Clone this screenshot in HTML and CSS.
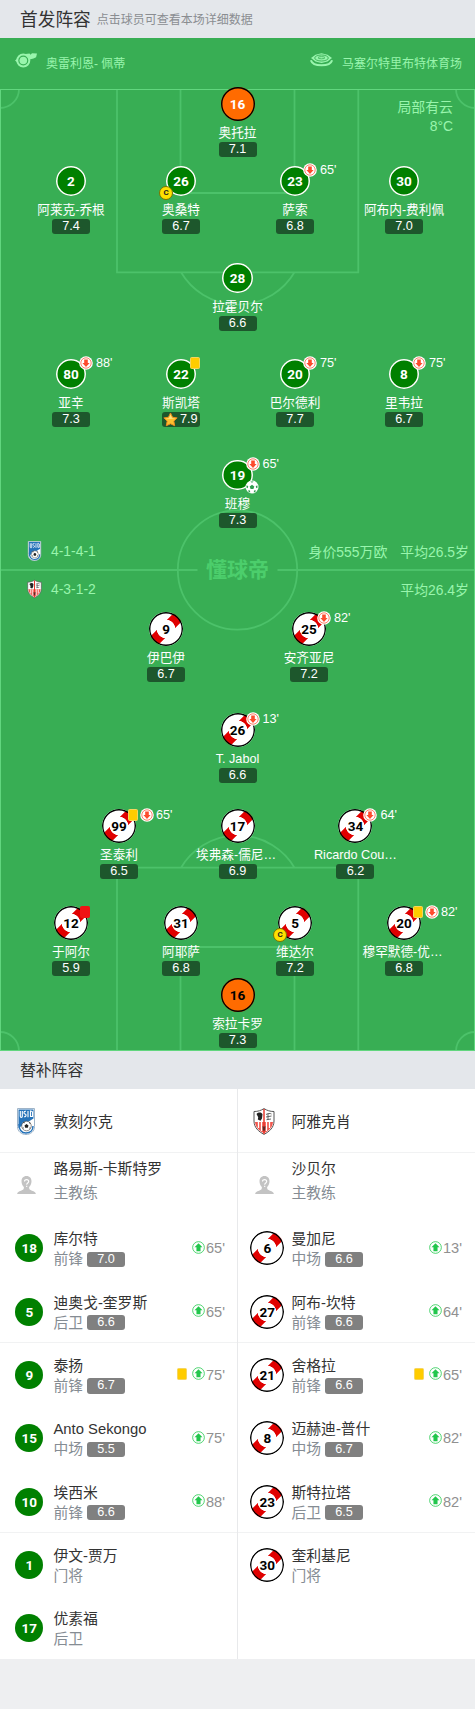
FILE: index.html
```html
<!DOCTYPE html>
<html lang="zh-CN">
<head>
  <meta charset="UTF-8" />
  <meta name="viewport" content="width=device-width, initial-scale=1.0"/>
  <title>首发阵容</title>
  <link rel="stylesheet" href="styles.css">
</head>
<body>

  <!-- shared icons -->
  <svg class="sprite" width="0" height="0">
    <symbol id="i-down" viewBox="0 0 14 14">
      <circle cx="7" cy="7" r="6.8" fill="#fff"/>
      <circle cx="7" cy="7" r="5.2" fill="none" stroke="#fd4b2d" stroke-width=".7"/>
      <path d="M5.2 3.4h3.6v3.7h1.8L7 10.900 3.400 7.100h1.800z" fill="#fd4b2d"/>
    </symbol>
    <symbol id="i-up" viewBox="0 0 14 14">
      <circle cx="7" cy="7" r="6.3" fill="#fff" stroke="#2bcb54" stroke-width=".9"/>
      <path d="M7 2.4l4.300 4.200H9.200v4.400H4.800V6.600H2.700z" fill="#22c64c"/>
    </symbol>
    <symbol id="i-ball" viewBox="0 0 14 14">
      <circle cx="7" cy="7" r="6.500" fill="#fff"/>
      <path d="M7 4.700l2.300 1.700-.9 2.700H5.600l-.9-2.700zM5.300 1.500h3.400L7 2.800zM12.300 5.200l-1.500 1 .5 2 1.300-.7zM1.700 5.200l1.500 1-.5 2-1.300-.7zM9 10.500l1.800-.2-.5 1.600-1.500.5zM5 10.500l-1.800-.2.5 1.600 1.500.5z" fill="#2f9e4f"/>
    </symbol>
    <symbol id="i-star" viewBox="0 0 14 14">
      <path d="M7 .9l1.900 4 4.300.6-3.100 3 .8 4.300L7 11l-3.900 1.800.8-4.300-3.100-3 4.300-.6z" fill="#fdc02f" stroke="#f08a1d" stroke-width=".9" stroke-linejoin="round"/>
      <path d="M7 2.300l1.300 3 3.200.5-4.500.8-4.500-.8 3.200-.5z" fill="#ffe37a"/>
    </symbol>
    <symbol id="i-coach" viewBox="0 0 19 18">
      <path d="M9.500 0c3.300 0 5 2.300 5 5.200 0 2.500-1 4.500-2.400 5.900 0 2.300.6 2.900 2.900 3.700 2.300.7 3.500 1.300 3.900 3.200H.1c.4-1.900 1.600-2.500 3.900-3.200 2.300-.8 2.900-1.400 2.900-3.700C5.500 9.700 4.500 7.700 4.500 5.200 4.500 2.300 6.200 0 9.500 0z" fill="#c3c3c3"/>
      <path d="M7.500 5.500c0-2.600 4.200-2.500 4.200 0 0 1.600-2 1.500-2 3.200M9.700 9.700v1.300" fill="none" stroke="#fff" stroke-width="1.100"/>
    </symbol>
    <symbol id="i-dunkerque" viewBox="0 0 18 27">
      <path d="M.5.5h17v18c0 5-4 8-8.500 8S.5 23.500.5 18.500z" fill="#fff" stroke="#9fb4c8"/>
      <path d="M1.500 1.500h15v9L1.500 20z" fill="#2673b9"/>
      <path d="M3.300 3v5.200c0 1.500 2 1.500 2 0V3M9 3.300c-2.500-.5-2.500 2.500-1 2.700 1.700.3 1.200 3.200-.9 2.600M11 3v6.300M13.500 3v5.500h2V4c0-.7-2-1-2-1z" fill="none" stroke="#fff" stroke-width="1.100"/>
      <path d="M2 16c0 6 2.500 9 7 9s7-3 7-7" fill="none" stroke="#2673b9" stroke-width="1.500"/>
      <circle cx="9.500" cy="18" r="4.800" fill="#fff" stroke="#444" stroke-width=".6"/>
      <path d="M9.500 16l2 1.500-.7 2.300H8.200l-.7-2.300zM6 14.500l1.800-.8-.6 1.700zM12 13.900l1.700 1-.9 1zM5.500 19l1 .5.200 1.800zM13.500 19l-.9.600v1.800z" fill="#222"/>
    </symbol>
    <symbol id="i-ajaccio" viewBox="0 0 22 27">
      <path d="M1 3.500C5 3.500 8 2.500 11 .6c3 1.900 6 2.900 10 2.900v9.500c0 6.500-4.500 10.500-10 13.400C5.500 23.500 1 19.500 1 13z" fill="#fff" stroke="#555" stroke-width="1"/>
      <path d="M2 14h18c-.3 5.200-4 8.700-9 11.200C6 22.700 2.300 19.200 2 14z" fill="#f0564d"/>
      <path d="M5.500 14v6M8.500 14v9M13.500 14v9M16.500 14v6" stroke="#fff" stroke-width="1.300"/>
      <path d="M11 1v25" stroke="#e8382e" stroke-width="1.500"/>
      <path d="M3.500 6c2-2 5-1.800 6 .2l-.5 4.300-1.500 2.300-2.700-1.300.4-2.300z" fill="#222"/>
      <path d="M13 6.500c2-1 4-1.500 5.500-.5M13 9l5.500-1M13.500 11.700l4.500-.7M15 5.500v6.500" fill="none" stroke="#555" stroke-width=".9"/>
      <path d="M9.500 18l1.500.8 1.500-.8-.4 4-1.100 1.200-1.100-1.200z" fill="#222" opacity=".7"/>
    </symbol>
  </svg>

  <div class="section-title">
    <h2>首发阵容</h2>
    <span>点击球员可查看本场详细数据</span>
  </div>

  <div class="field">
    <svg class="pitch" width="475" height="962" viewBox="0 0 475 962">
      <g fill="none" stroke="#4cc26a" stroke-width="1.800">
        <path d="M117 0v183.300h241.300V0M180.500 0v104h114V0M181 183.300a65.900 65.900 0 0 0 113.500 0"/>
        <path d="M117 962V778.700h241.300V962M180.500 962V858h114v104M181 778.700a65.900 65.900 0 0 1 113.500 0"/>
        <path d="M0 19a19 19 0 0 0 19-19M475 19a19 19 0 0 1-19-19M0 943a19 19 0 0 1 19 19M475 943a19 19 0 0 0-19 19"/>
        <circle cx="237.500" cy="481" r="59.700"/>
        <path d="M0 481h197.500M277.500 481H475"/>
      </g>
      <rect x=".5" y=".5" width="474" height="961" fill="none" stroke="#61d67e"/>
      <text class="pitch-logo" x="237.500" y="488">懂球帝</text>
    </svg>

    <div class="match-info">
      <div class="info-item">
        <svg width="22" height="15" viewBox="0 0 22 15">
          <path d="M10.500 1L14.500.5l1 1.300L17 .3l5 .2-.9 3.800-2.600 1.200-4 1z" fill="#99f5ad"/>
          <circle cx="8.300" cy="7.500" r="6" fill="none" stroke="#99f5ad" stroke-width="2"/>
          <circle cx="8.300" cy="7.500" r="3.800" fill="#99f5ad"/>
          <path d="M0 7.500l2.500-1.900v4z" fill="#99f5ad"/>
        </svg>
        <span>奥雷利恩- 佩蒂</span>
      </div>
      <div class="info-item">
        <svg width="23" height="14" viewBox="0 0 23 14">
          <path d="M11.500.3l6 1.500 4.500 3.200-4.500 3.500-6 1.500-6-1.500L1 5l4.500-3.200z" fill="#99f5ad"/>
          <ellipse cx="11.500" cy="5" rx="6.800" ry="3" fill="none" stroke="#38ae54" stroke-width=".9"/>
          <ellipse cx="11.500" cy="4.700" rx="3.500" ry="1.100" fill="none" stroke="#38ae54" stroke-width=".8"/>
          <path d="M.9 7.200c1.800 6.700 19.400 6.700 21.200 0" fill="none" stroke="#99f5ad" stroke-width="2"/>
        </svg>
        <span>马塞尔特里布特体育场</span>
      </div>
    </div>
    <div class="weather">局部有云<br>8°C</div>

    <div class="line line-1">
      <div class="player"><div class="icon"><b class="kit keeper">16</b></div><p>奥托拉</p><i>7.1</i></div>
    </div>
    <div class="line line-4 home-back">
      <div class="player"><div class="icon"><b class="kit home">2</b></div><p>阿莱克-乔根</p><i>7.4</i></div>
      <div class="player"><div class="icon"><b class="kit home">26</b><em class="captain">C</em></div><p>奥桑特</p><i>6.7</i></div>
      <div class="player"><div class="icon"><b class="kit home">23</b><div class="events"><svg><use href="#i-down"/></svg>65'</div></div><p>萨索</p><i>6.8</i></div>
      <div class="player"><div class="icon"><b class="kit home">30</b></div><p>阿布内-费利佩</p><i>7.0</i></div>
    </div>
    <div class="line line-1 home-dm">
      <div class="player"><div class="icon"><b class="kit home">28</b></div><p>拉霍贝尔</p><i>6.6</i></div>
    </div>
    <div class="line line-4 home-mid">
      <div class="player"><div class="icon"><b class="kit home">80</b><div class="events"><svg><use href="#i-down"/></svg>88'</div></div><p>亚辛</p><i>7.3</i></div>
      <div class="player"><div class="icon"><b class="kit home">22</b><div class="events"><u class="card"></u></div></div><p>斯凯塔</p><i class="best"><svg><use href="#i-star"/></svg>7.9</i></div>
      <div class="player"><div class="icon"><b class="kit home">20</b><div class="events"><svg><use href="#i-down"/></svg>75'</div></div><p>巴尔德利</p><i>7.7</i></div>
      <div class="player"><div class="icon"><b class="kit home">8</b><div class="events"><svg><use href="#i-down"/></svg>75'</div></div><p>里韦拉</p><i>6.7</i></div>
    </div>
    <div class="line line-1 home-top">
      <div class="player"><div class="icon"><b class="kit home">19</b><div class="events"><svg><use href="#i-down"/></svg>65'</div><svg class="goal"><use href="#i-ball"/></svg></div><p>班穆</p><i>7.3</i></div>
    </div>

    <div class="formations">
      <div class="formation"><svg class="badge"><use href="#i-dunkerque"/></svg><span>4-1-4-1</span><div class="stats"><span>身价555万欧</span><span>平均26.5岁</span></div></div>
      <div class="formation"><svg class="badge"><use href="#i-ajaccio"/></svg><span>4-3-1-2</span><div class="stats"><span>平均26.4岁</span></div></div>
    </div>

    <div class="line line-2">
      <div class="player"><div class="icon"><b class="kit away">9</b></div><p>伊巴伊</p><i>6.7</i></div>
      <div class="player"><div class="icon"><b class="kit away">25</b><div class="events"><svg><use href="#i-down"/></svg>82'</div></div><p>安齐亚尼</p><i>7.2</i></div>
    </div>
    <div class="line line-1 away-am">
      <div class="player"><div class="icon"><b class="kit away">26</b><div class="events"><svg><use href="#i-down"/></svg>13'</div></div><p>T. Jabol</p><i>6.6</i></div>
    </div>
    <div class="line line-3">
      <div class="player"><div class="icon"><b class="kit away">99</b><div class="events"><u class="card"></u><svg><use href="#i-down"/></svg>65'</div></div><p>圣泰利</p><i>6.5</i></div>
      <div class="player"><div class="icon"><b class="kit away">17</b></div><p class="cut">埃弗森-儒尼…</p><i>6.9</i></div>
      <div class="player"><div class="icon"><b class="kit away">34</b><div class="events"><svg><use href="#i-down"/></svg>64'</div></div><p>Ricardo Cou…</p><i>6.2</i></div>
    </div>
    <div class="line line-4 away-back">
      <div class="player"><div class="icon"><b class="kit away">12</b><div class="events"><u class="card red"></u></div></div><p>于阿尔</p><i>5.9</i></div>
      <div class="player"><div class="icon"><b class="kit away">31</b></div><p>阿耶萨</p><i>6.8</i></div>
      <div class="player"><div class="icon"><b class="kit away">5</b><em class="captain">C</em></div><p>维达尔</p><i>7.2</i></div>
      <div class="player"><div class="icon"><b class="kit away">20</b><div class="events"><u class="card"></u><svg><use href="#i-down"/></svg>82'</div></div><p class="cut">穆罕默德-优…</p><i>6.8</i></div>
    </div>
    <div class="line line-1 away-gk">
      <div class="player"><div class="icon"><b class="kit keeper dark">16</b></div><p>索拉卡罗</p><i>7.3</i></div>
    </div>
  </div>

  <div class="section-title bench-title">
    <h3>替补阵容</h3>
  </div>

  <div class="bench">
    <div class="team">
      <div class="row"><div class="pic"><svg class="badge"><use href="#i-dunkerque"/></svg></div><div class="who">敦刻尔克</div></div>
      <div class="row coach"><div class="pic"><svg class="face"><use href="#i-coach"/></svg></div><div class="who">路易斯-卡斯特罗<small>主教练</small></div></div>
      <div class="row"><div class="pic"><b class="kit home">18</b></div><div class="who">库尔特<small>前锋<i>7.0</i></small></div><div class="sub"><svg><use href="#i-up"/></svg>65'</div></div>
      <div class="row"><div class="pic"><b class="kit home">5</b></div><div class="who">迪奥戈-奎罗斯<small>后卫<i>6.6</i></small></div><div class="sub"><svg><use href="#i-up"/></svg>65'</div></div>
      <div class="row"><div class="pic"><b class="kit home">9</b></div><div class="who">泰扬<small>前锋<i>6.7</i></small></div><div class="sub"><u class="card"></u><svg><use href="#i-up"/></svg>75'</div></div>
      <div class="row"><div class="pic"><b class="kit home">15</b></div><div class="who">Anto Sekongo<small>中场<i>5.5</i></small></div><div class="sub"><svg><use href="#i-up"/></svg>75'</div></div>
      <div class="row"><div class="pic"><b class="kit home">10</b></div><div class="who">埃西米<small>前锋<i>6.6</i></small></div><div class="sub"><svg><use href="#i-up"/></svg>88'</div></div>
      <div class="row"><div class="pic"><b class="kit home">1</b></div><div class="who">伊文-贾万<small>门将</small></div></div>
      <div class="row"><div class="pic"><b class="kit home">17</b></div><div class="who">优素福<small>后卫</small></div></div>
    </div>
    <div class="team">
      <div class="row"><div class="pic"><svg class="badge"><use href="#i-ajaccio"/></svg></div><div class="who">阿雅克肖</div></div>
      <div class="row coach"><div class="pic"><svg class="face"><use href="#i-coach"/></svg></div><div class="who">沙贝尔<small>主教练</small></div></div>
      <div class="row"><div class="pic"><b class="kit away">6</b></div><div class="who">曼加尼<small>中场<i>6.6</i></small></div><div class="sub"><svg><use href="#i-up"/></svg>13'</div></div>
      <div class="row"><div class="pic"><b class="kit away">27</b></div><div class="who">阿布-坎特<small>前锋<i>6.6</i></small></div><div class="sub"><svg><use href="#i-up"/></svg>64'</div></div>
      <div class="row"><div class="pic"><b class="kit away">21</b></div><div class="who">舍格拉<small>前锋<i>6.6</i></small></div><div class="sub"><u class="card"></u><svg><use href="#i-up"/></svg>65'</div></div>
      <div class="row"><div class="pic"><b class="kit away">8</b></div><div class="who">迈赫迪-普什<small>中场<i>6.7</i></small></div><div class="sub"><svg><use href="#i-up"/></svg>82'</div></div>
      <div class="row"><div class="pic"><b class="kit away">23</b></div><div class="who">斯特拉塔<small>后卫<i>6.5</i></small></div><div class="sub"><svg><use href="#i-up"/></svg>82'</div></div>
      <div class="row"><div class="pic"><b class="kit away">30</b></div><div class="who">奎利基尼<small>门将</small></div></div>
    </div>
  </div>

</body>
</html>
```
FILE: styles.css
```css
* {
  box-sizing: border-box;
}

body {
  margin: 0;
  font-family: "Liberation Sans", "Noto Sans CJK SC", sans-serif;
  background-color: #eeeff1;
  color: #333;
}

h2, h3, p {
  margin: 0;
  font-weight: normal;
}

i, em {
  font-style: normal;
}

u {
  text-decoration: none;
}

.sprite {
  position: absolute;
}

.section-title {
  height: 38px;
  padding: 0 0 2px 20px;
  display: flex;
  align-items: center;
  background-color: #e4e7eb;
}

.section-title h2 {
  font-size: 17.7px;
}

.section-title h3 {
  font-size: 15.8px;
}

.section-title span {
  margin-left: 6px;
  font-size: 12px;
  color: #8a8d91;
}

/* pitch */

.field {
  position: relative;
  height: 1013px;
  background-color: #38ae54;
  color: #fff;
}

.pitch {
  position: absolute;
  left: 0;
  top: 51px;
}

.pitch-logo {
  font-family: "Noto Sans CJK SC", sans-serif;
  font-size: 21px;
  font-weight: bold;
  text-anchor: middle;
  fill: #4cce6c;
}

.match-info {
  height: 49px;
  padding: 0 13px 0 15px;
  display: flex;
  justify-content: space-between;
  align-items: center;
  font-size: 12px;
  color: #99f5ad;
}

.info-item {
  display: flex;
  align-items: center;
  gap: 9px;
}

.info-item svg {
  margin-top: -5px;
}

.weather {
  position: absolute;
  right: 22px;
  top: 60px;
  font-size: 13.9px;
  line-height: 19px;
  text-align: right;
  color: #99f5ad;
}

.line {
  position: relative;
  display: grid;
  justify-items: center;
}

.line-1 {
  grid-template-columns: 475px;
}

.line-2 {
  grid-template-columns: 143px 143px;
  padding-left: 94.5px;
}

.line-3 {
  grid-template-columns: 118px 119px 117px;
  padding-left: 60px;
  margin-top: 26px;
}

.line-4 {
  grid-template-columns: 110px 110px 118px 100px;
  padding-left: 16px;
}

.home-back { margin-top: 7px; }
.home-dm { margin-top: 27px; }
.home-mid { margin-top: 26px; }
.home-top { margin-top: 31px; }
.away-am { margin-top: 31px; }
.away-back { margin-top: 27px; }
.away-gk { margin-top: 2px; }

.player {
  height: 70px;
  display: flex;
  flex-direction: column;
  align-items: center;
}

.icon {
  position: relative;
  width: 34px;
  height: 34px;
  display: flex;
  justify-content: center;
  align-items: center;
}

.player p {
  margin-top: 3px;
  font-size: 12.67px;
  line-height: 18px;
  white-space: nowrap;
}

.player .cut {
  width: 83px;
}

.player > i {
  width: 38px;
  height: 15px;
  border-radius: 3px;
  background-color: #1d572c;
  font-size: 12.67px;
  line-height: 15px;
  text-align: center;
}

.player > .best {
  display: flex;
  padding-left: 1px;
  gap: 2px;
}

.best svg {
  width: 15px;
  height: 15px;
}

.kit {
  width: 34px;
  height: 34px;
  border-radius: 50%;
  display: flex;
  justify-content: center;
  align-items: center;
  font-family: Roboto, sans-serif;
  font-size: 13.5px;
  font-weight: bold;
}

.kit.home {
  width: 30.4px;
  height: 30.4px;
  box-shadow: inset 0 0 0 1.5px #fff;
  background-color: #008000;
  color: #fff;
}

.kit.away {
  box-shadow: inset 0 0 0 1.4px #000;
  background: radial-gradient(circle, #fff 9px, transparent 9.5px),
    linear-gradient(135deg, #fff calc(50% - 6px), #e00000 calc(50% - 5.5px), #e00000 calc(50% + 5.5px), #fff calc(50% + 6px));
  color: #000;
}

.kit.keeper {
  box-shadow: inset 0 0 0 1.4px #000;
  background-color: #ff6b00;
  color: #fff;
}

.kit.dark {
  color: #000;
}

.events {
  position: absolute;
  left: 25px;
  top: -1px;
  height: 13px;
  display: flex;
  align-items: center;
  font-size: 12.67px;
  white-space: nowrap;
}

.events svg {
  width: 14px;
  height: 14px;
  margin-right: 3px;
}

.card {
  width: 10px;
  height: 12px;
  margin: 0 2px 0 1px;
  border-radius: 1.5px;
  border: 1px solid #f5d560;
  background-color: #ffcc00;
}

.card + svg {
  margin-right: 2px;
}

.card.red {
  border-color: #f01414;
  background-color: #f01414;
}

.captain {
  position: absolute;
  left: -5px;
  top: 22px;
  width: 14px;
  height: 14px;
  border: 1px solid #7a7200;
  border-radius: 50%;
  background-color: #ffe000;
  color: #222;
  font: bold 8px/12px Roboto, sans-serif;
  text-align: center;
}

.goal {
  position: absolute;
  left: 24px;
  top: 22px;
  width: 14px;
  height: 14px;
}

.formations {
  position: relative;
  height: 84px;
  padding: 4px 6px 4px 27px;
  font-size: 13.9px;
  color: #99f5ad;
}

.formation {
  height: 38px;
  display: flex;
  align-items: center;
}

.formation .badge {
  width: 15px;
  height: 20px;
  margin-right: 9px;
}

.stats {
  margin-left: auto;
  display: flex;
  gap: 13px;
}

/* bench */

.bench {
  display: grid;
  grid-template-columns: 238px 237px;
  height: 570px;
  background-color: #fff;
}

.team:first-child {
  border-right: 1px solid #e8e9eb;
}

.row {
  height: 63.33px;
  padding: 2px 13px 0 0;
  display: flex;
  align-items: center;
}

.team:first-child .row {
  padding-right: 12px;
}

.row:nth-child(3n+2) {
  padding-top: 1px;
  border-top: 1px solid #f1f2f3;
}

.pic {
  width: 53.5px;
  padding-right: 1px;
  display: flex;
  justify-content: center;
}

.pic .badge {
  width: 22px;
  height: 27px;
}

.pic .face {
  width: 19px;
  height: 18px;
}

.pic .kit {
  margin-left: 6px;
}

.pic .home {
  width: 28px;
  height: 28px;
  box-shadow: none;
}

.who {
  margin-top: 2px;
  font-size: 14.8px;
  line-height: 20px;
}

.row:first-child .who {
  margin-top: 0;
}

.who small {
  display: flex;
  align-items: center;
  font-size: 14.8px;
  color: #858c93;
}

.who i {
  width: 38px;
  height: 15.5px;
  margin-left: 4px;
  border-radius: 3px;
  background-color: #808080;
  color: #fff;
  font-size: 12.67px;
  line-height: 15.5px;
  text-align: center;
}

.row.coach .who {
  margin-top: -7px;
  line-height: 24px;
}

.sub {
  margin-left: auto;
  display: flex;
  align-items: center;
  font-size: 14.6px;
  color: #909090;
}

.sub svg {
  width: 13px;
  height: 13px;
  margin: -2px 1px 0 0;
}

.sub .card {
  margin: -2px 5px 0 0;
}
```
